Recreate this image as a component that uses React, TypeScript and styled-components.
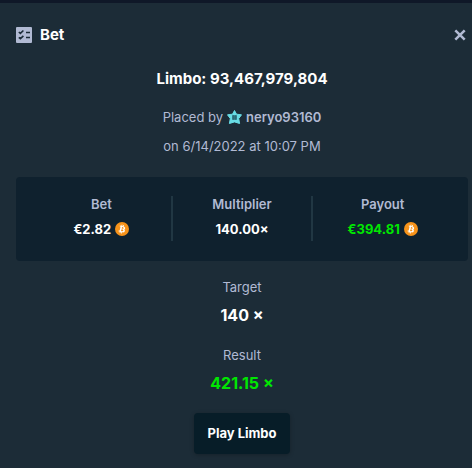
import React from 'react';
import styled, { createGlobalStyle } from 'styled-components';

const color = {
  backdrop: '#0f1828',
  panel: '#1c2c37',
  inset: '#0f212e',
  line: '#213743',
  button: '#071d28',
  muted: '#b1bad3',
  text: '#ffffff',
  win: '#00e701',
};

const GlobalStyle = createGlobalStyle`
  *, *::before, *::after { box-sizing: border-box; }
  body {
    margin: 0;
    background: ${color.panel};
    color: ${color.muted};
    font: 400 13px/20px Inter, "Liberation Sans", sans-serif;
  }
  h1, h2, p, dl, dt, dd { margin: 0; font: inherit; }
`;

const Modal = styled.main`
  border-top: 3px solid ${color.backdrop};
  background: ${color.panel};
  padding: 20px 4px 12px 16px;
`;

const Header = styled.header`
  display: flex;
  align-items: center;
  gap: 8px;
  height: 24px;
`;

const Heading = styled.h1`
  && { font-size: 15px; font-weight: 700; }
  flex: 1;
  color: ${color.text};
`;

const CloseButton = styled.button`
  display: flex;
  padding: 2px;
  border: 0;
  background: none;
  color: ${color.muted};
  cursor: pointer;
`;

const Content = styled.section`
  display: flex;
  flex-direction: column;
  align-items: center;
  padding-top: 20px;
`;

const GameTitle = styled.h2`
  && { font-size: 15px; line-height: 24px; font-weight: 700; }
  color: ${color.text};
`;

const Meta = styled.div`
  display: flex;
  flex-direction: column;
  align-items: center;
  gap: 9px;
  padding: 16px 0 21px;
`;

const MetaLine = styled.p`
  display: flex;
  align-items: center;
  gap: 4px;
`;

const UserLink = styled.a`
  display: inline-flex;
  align-items: center;
  gap: 4px;
  color: ${color.muted};
  font-weight: 600;
  text-decoration: none;
`;

const Stats = styled.dl`
  display: flex;
  align-self: stretch;
  padding: 19px 16px 20px;
  border-radius: 4px;
  background: ${color.inset};
`;

const Stat = styled.div`
  flex: 1 1 0;
  display: flex;
  flex-direction: column;
  align-items: center;
  gap: 6px;
  &:nth-child(2) {
    border: solid ${color.line};
    border-width: 0 2px;
  }
`;

const StatLabel = styled.dt`
  && { font-weight: 600; line-height: 17px; }
`;

const StatValue = styled.dd<{ $win?: boolean }>`
  && { font-weight: 700; }
  display: flex;
  align-items: center;
  gap: 4px;
  padding-bottom: 2px;
  color: ${(p) => (p.$win ? color.win : color.text)};
`;

const Outcome = styled.dl`
  display: flex;
  flex-direction: column;
  align-items: center;
  gap: 18px;
  padding: 16px 0 18px;
`;

const OutcomeItem = styled.div`
  display: flex;
  flex-direction: column;
  align-items: center;
  gap: 6px;
`;

const OutcomeValue = styled.dd<{ $win?: boolean }>`
  && { font-size: 16px; line-height: 24px; font-weight: 700; }
  color: ${(p) => (p.$win ? color.win : color.text)};
`;

const PlayButton = styled.button`
  padding: 10px 13px 11px;
  border: 0;
  border-radius: 4px;
  background: ${color.button};
  box-shadow: 0 1px 4px rgba(0, 0, 0, 0.25);
  color: ${color.text};
  font: 700 13px/20px Inter, "Liberation Sans", sans-serif;
  cursor: pointer;
`;

const ChecklistIcon = () => (
  <svg width="16" height="16" viewBox="0 0 16 16" aria-hidden="true">
    <rect width="16" height="16" rx="1" fill={color.muted} />
    <g fill="none" stroke={color.panel} strokeWidth="1.6">
      <path d="M2.8 5l1.6 1.4 3-2.9M2.8 10.3l1.6 1.4 3-2.9M10 5.5h4M10 10.5h4" />
    </g>
  </svg>
);

const CrossIcon = () => (
  <svg width="12" height="12" viewBox="0 0 12 12" aria-hidden="true">
    <path d="M1.3 1.3l9.4 9.4M10.7 1.3l-9.4 9.4" stroke="currentColor" strokeWidth="2.5" />
  </svg>
);

const StarIcon = () => (
  <svg width="15" height="14" viewBox="0 0 15 14" aria-hidden="true">
    <path
      d="M7.5.5l2 3.7 5 .6-2.8 3.8.9 4.9-5.1-1.6-5.1 1.6.9-4.9L.5 4.8l5-.6z"
      fill="#68dce4"
      stroke="#68dce4"
      strokeLinejoin="round"
    />
    <path d="M5 5.2h5v4.6H5z" fill="#327b87" />
    <path d="M6.6 5.2v4.6M8.4 5.2v4.6" stroke="#276470" strokeWidth=".8" />
  </svg>
);

const BitcoinIcon = () => (
  <svg width="14" height="14" viewBox="0 0 32 32" role="img" aria-label="BTC">
    <circle cx="16" cy="16" r="16" fill="#f7931a" />
    <path
      fill="#fff"
      d="M23.2 14c.3-2.1-1.3-3.3-3.5-4l.7-2.9-1.8-.4-.7 2.8-1.4-.4.7-2.8-1.7-.4-.8 2.9-3.6-.9-.5 1.9 1.3.3c.7.2.8.6.8 1l-2 8.2c-.1.2-.3.5-.8.4l-1.3-.3-.9 2 3.5.9-.8 2.9 1.8.5.7-2.9 1.4.4-.7 2.8 1.7.5.8-2.9c3 .6 5.3.3 6.2-2.4.8-2.2 0-3.4-1.6-4.3 1.2-.2 2.1-1 2.5-2.9zm-4.1 5.7c-.5 2.1-4.2 1-5.3.7l.9-3.8c1.2.3 5 .9 4.4 3.1zm.6-5.7c-.5 2-3.5 1-4.5.7l.8-3.4c1 .2 4.2.7 3.7 2.7z"
    />
  </svg>
);

export default function App() {
  return (
    <>
      <GlobalStyle />
      <Modal>
        <Header>
          <ChecklistIcon />
          <Heading>Bet</Heading>
          <CloseButton type="button" aria-label="Close">
            <CrossIcon />
          </CloseButton>
        </Header>
        <Content>
          <GameTitle>Limbo: 93,467,979,804</GameTitle>
          <Meta>
            <MetaLine>
              Placed by
              <UserLink href="#neryo93160">
                <StarIcon />
                neryo93160
              </UserLink>
            </MetaLine>
            <MetaLine>on 6/14/2022 at 10:07 PM</MetaLine>
          </Meta>
          <Stats>
            <Stat>
              <StatLabel>Bet</StatLabel>
              <StatValue>
                €2.82 <BitcoinIcon />
              </StatValue>
            </Stat>
            <Stat>
              <StatLabel>Multiplier</StatLabel>
              <StatValue>140.00×</StatValue>
            </Stat>
            <Stat>
              <StatLabel>Payout</StatLabel>
              <StatValue $win>
                €394.81 <BitcoinIcon />
              </StatValue>
            </Stat>
          </Stats>
          <Outcome>
            <OutcomeItem>
              <dt>Target</dt>
              <OutcomeValue>140 ×</OutcomeValue>
            </OutcomeItem>
            <OutcomeItem>
              <dt>Result</dt>
              <OutcomeValue $win>421.15 ×</OutcomeValue>
            </OutcomeItem>
          </Outcome>
          <PlayButton type="button">Play Limbo</PlayButton>
        </Content>
      </Modal>
    </>
  );
}
